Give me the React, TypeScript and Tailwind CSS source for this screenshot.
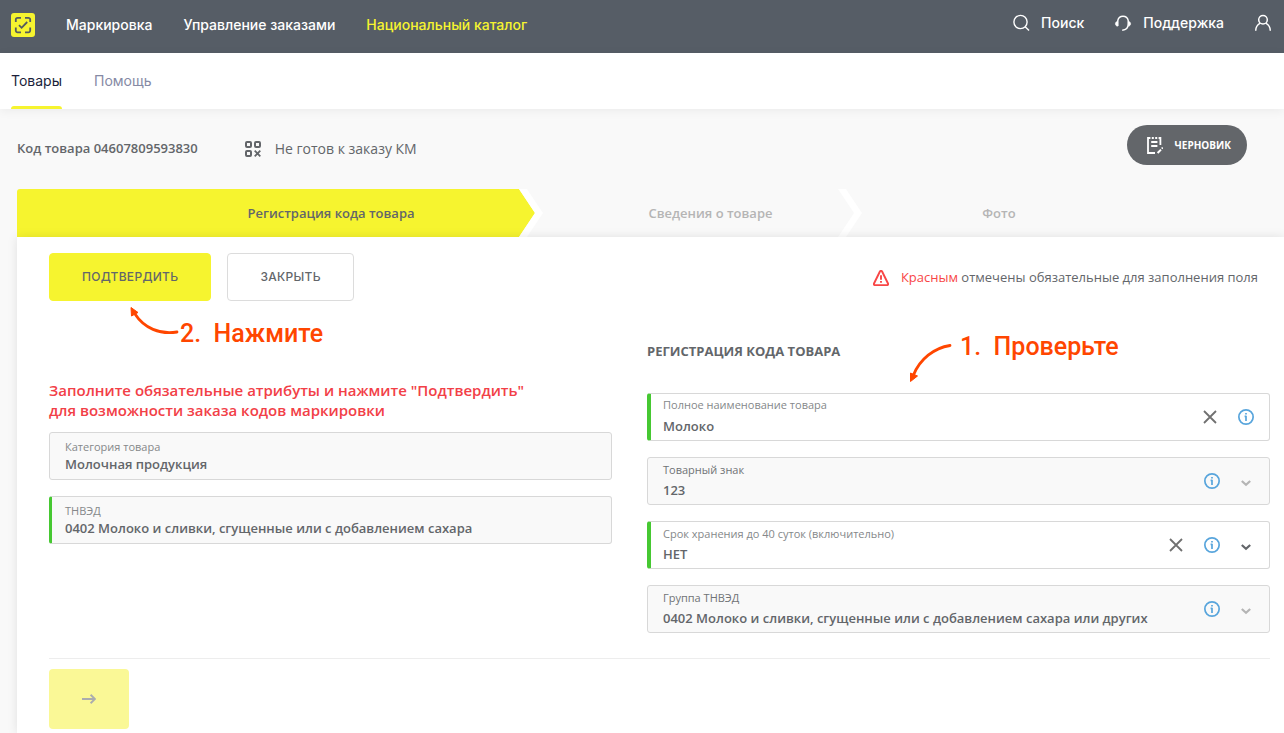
import type { ReactNode } from "react";

function LogoIcon() {
  return (
    <svg width="24" height="24" viewBox="0 0 24 24" fill="none" aria-hidden="true">
      <rect width="24" height="24" rx="3" fill="#f6f42f" />
      <g stroke="#555b5f" strokeWidth="1.8">
        <path d="M4.8 9V6.6a1.8 1.8 0 0 1 1.8-1.8H10M14 4.8h3.4a1.8 1.8 0 0 1 1.8 1.8V9M19.2 14.6v3a1.8 1.8 0 0 1-1.8 1.8H14M10 19.4H6.6a1.8 1.8 0 0 1-1.8-1.8v-3" />
        <path d="m8 12.2 2.6 2.6L16.2 9" />
      </g>
    </svg>
  );
}

function SearchIcon() {
  return (
    <svg width="18" height="18" viewBox="0 0 18 18" fill="none" stroke="#fff" strokeWidth="1.4" aria-hidden="true">
      <circle cx="8.500" cy="8" r="6.600" />
      <path d="m13.200 12.700 3.800 3.800" />
    </svg>
  );
}

function SupportIcon() {
  return (
    <svg width="18" height="18" viewBox="0 0 18 18" fill="none" stroke="#fff" strokeWidth="1.4" aria-hidden="true">
      <path d="M3.8 12V6.5a5.3 5.3 0 0 1 10.400 0V10c0 3.600-1.600 6-6 6.200" />
      <path d="M3.600 7.400C2.200 7.500 1.400 8.500 1.400 9.800s.8 2.200 2.200 2.400zM14.400 7.400c1.400.1 2.200 1.100 2.200 2.400s-.8 2.200-2.200 2.400z" fill="#fff" strokeWidth=".6" />
    </svg>
  );
}

function UserIcon() {
  return (
    <svg width="18" height="18" viewBox="0 0 18 18" fill="none" stroke="#fff" strokeWidth="1.5" aria-hidden="true">
      <circle cx="9" cy="5.700" r="4.300" />
      <path d="M1.700 16.800c0-3.200 1.600-6 4.600-7.600M16.300 16.800c0-3.200-1.600-6-4.600-7.600" />
    </svg>
  );
}

function CodeIcon() {
  return (
    <svg width="16" height="16" viewBox="0 0 16 16" fill="none" stroke="#63666a" strokeWidth="2" aria-hidden="true">
      <rect x="1" y="1" width="5" height="5" rx="1" />
      <rect x="10" y="1" width="5" height="5" rx="1" />
      <rect x="1" y="10" width="5" height="5" rx="1" />
      <path d="m9.700 9.700 5.600 5.600M15.300 9.700l-5.600 5.600" strokeWidth="1.800" />
    </svg>
  );
}

function DraftIcon() {
  return (
    <svg width="16" height="17" viewBox="0 0 16 17" fill="none" stroke="#fff" strokeWidth="1.800" aria-hidden="true">
      <path d="M3.400 1H1v15h7M4.800 1h2M8.200 1h2M11.600 1h1.800v7M4.200 5h6.200M4.200 9h6.200" />
      <path d="m10.600 16 3.400-3.400M14.800 11.600l1-1" strokeWidth="2" />
    </svg>
  );
}

function WarningIcon() {
  return (
    <svg width="16" height="16" viewBox="0 0 16 16" fill="none" stroke="#f84646" strokeWidth="1.900" strokeLinejoin="round" aria-hidden="true">
      <path d="M6.900 1.500a1.300 1.300 0 0 1 2.200 0l5.900 12c.4.900-.1 1.600-1 1.600H2c-.9 0-1.400-.7-1-1.600z" />
      <path d="M8 5.200v4.600M8 11v1.700" />
    </svg>
  );
}

function InfoIcon() {
  return (
    <svg width="16" height="16" viewBox="0 0 16 16" fill="none" stroke="#58a5dc" strokeWidth="1.700" aria-hidden="true">
      <circle cx="8" cy="8" r="7.150" />
      <path d="M8 4v1.600M6.600 7.400H8M8 6.700v5.300" />
    </svg>
  );
}

function ClearIcon() {
  return (
    <svg width="14" height="14" viewBox="0 0 14 14" fill="none" stroke="#707070" strokeWidth="1.800" aria-hidden="true">
      <path d="m1 1 12 12M13 1 1 13" />
    </svg>
  );
}

function ChevronIcon({ active }: { active?: boolean }) {
  return (
    <svg width="10" height="7" viewBox="0 0 10 7" fill="none" stroke={active ? "#63666a" : "#b5b5b5"} strokeWidth="2.200" aria-hidden="true">
      <path d="m.8 1 4.200 3.800L9.200 1" />
    </svg>
  );
}

function StepArrow({ fill }: { fill: string }) {
  return (
    <svg className="block h-12 w-6 shrink-0" viewBox="0 0 24 48" preserveAspectRatio="none" aria-hidden="true">
      <path d="M0 0 16 24 0 48z" fill={fill} />
      <path d="M0 0h8l16 24L8 48H0l16-24z" fill="#fff" />
    </svg>
  );
}

type FieldProps = {
  id: string;
  label: string;
  value: string;
  kind: "text" | "select";
  valid?: boolean;
  disabled?: boolean;
  clearable?: boolean;
  info?: boolean;
  compact?: boolean;
};

function Field({ id, label, value, kind, valid, disabled, clearable, info, compact }: FieldProps) {
  const valueClass =
    "block w-full appearance-none bg-transparent p-0 text-[13px] font-semibold text-[#63666a] opacity-100 outline-none " +
    (compact ? "h-[18px]" : "h-6");
  return (
    <div
      className={
        "flex h-12 items-center rounded-[3px] border border-[#d8d8d8] pr-[15px] " +
        (disabled ? "bg-[#f9f9f9] " : "bg-white ") +
        (valid ? (compact ? "border-l-[3px] border-l-[#46c832] pl-[13px]" : "border-l-4 border-l-[#46c832] pl-3") : "pl-[15px]")
      }
    >
      <div className={"min-w-0 flex-1 " + (kind === "select" ? "pt-[3px]" : "pt-px")}>
        <label
          htmlFor={id}
          className={"block pb-0.5 text-[11px] leading-[14px] " + (disabled && !compact ? "text-[#707376]" : "text-[#85888a]")}
        >
          {label}
        </label>
        {kind === "text" ? (
          <input id={id} type="text" defaultValue={value} readOnly={disabled} className={valueClass} />
        ) : (
          <select id={id} defaultValue={value} disabled={disabled} className={valueClass}>
            <option>{value}</option>
          </select>
        )}
      </div>
      {clearable && (
        <button type="button" aria-label="Очистить" className="mr-5 flex w-4 justify-center">
          <ClearIcon />
        </button>
      )}
      {info && (
        <button type="button" aria-label="Информация" className="flex w-4 justify-center">
          <InfoIcon />
        </button>
      )}
      {kind === "select" && (
        <span className="ml-[18px] mt-1 flex w-4 justify-center">
          <ChevronIcon active={!disabled} />
        </span>
      )}
    </div>
  );
}

function Note({ children, className }: { children: ReactNode; className: string }) {
  return (
    <p
      className={
        "pointer-events-none absolute whitespace-pre font-[Roboto,sans-serif] text-[25px] font-medium leading-9 text-[#ff4600] " +
        className
      }
    >
      {children}
    </p>
  );
}

export default function App() {
  return (
    <div className="flex min-h-screen flex-col overflow-x-hidden bg-[#f9f9f9] font-['Open_Sans','Noto_Sans',sans-serif] text-[#63666a]">
      <header className="flex h-[53px] items-center justify-between bg-[#565d66] pl-[11px] pr-3 font-[Inter,sans-serif] text-sm font-medium text-white">
        <nav className="mb-1 flex items-center gap-[31px]">
          <a href="#" aria-label="Главная">
            <LogoIcon />
          </a>
          <a href="#">Маркировка</a>
          <a href="#">Управление заказами</a>
          <a href="#" className="text-[#f6f42f]">Национальный каталог</a>
        </nav>
        <div className="mb-2 flex items-center gap-[30px]">
          <button type="button" className="flex items-center gap-[11px]">
            <SearchIcon />
            Поиск
          </button>
          <button type="button" className="flex items-center gap-[11px]">
            <SupportIcon />
            Поддержка
          </button>
          <button type="button" aria-label="Профиль">
            <UserIcon />
          </button>
        </div>
      </header>

      <nav className="relative flex h-14 gap-8 bg-white pl-[11px] font-[Inter,sans-serif] text-sm shadow-[0_2px_10px_rgba(0,0,0,0.06)]">
        <a href="#" className="flex flex-col justify-between text-[#1b1f3b]">
          <span className="flex flex-1 items-center pt-[3px]">Товары</span>
          <span className="h-[3px] rounded-t-sm bg-[#f6f42f]" />
        </a>
        <a href="#" className="flex items-center text-[#868aa5]">Помощь</a>
      </nav>

      <div className="flex items-start justify-between pb-6 pl-[17px] pr-[37px] pt-4">
        <div className="flex h-12 items-center">
          <h1 className="text-[13px] font-semibold">Код товара 04607809593830</h1>
          <span className="ml-[47px] mr-3.5">
            <CodeIcon />
          </span>
          <p className="text-sm">Не готов к заказу КМ</p>
        </div>
        <div className="flex h-10 items-center gap-3 rounded-full bg-[#63666a] px-4 pl-5 text-[10px] font-bold text-white">
          <DraftIcon />
          ЧЕРНОВИК
        </div>
      </div>

      <main className="-mt-2 flex flex-1 flex-col pl-[17px]">
        <ol className="grid h-12 grid-cols-[526fr_319fr_422fr] text-[13px] font-semibold">
          <li className="flex">
            <div className="flex flex-1 items-center justify-center rounded-tl-[3px] bg-[#f6f42f] pl-[126px] pt-px">Регистрация кода товара</div>
            <StepArrow fill="#f6f42f" />
          </li>
          <li className="flex text-[#b5b5b5]">
            <div className="flex flex-1 items-center justify-center pl-10 pt-px">Сведения о товаре</div>
            <StepArrow fill="#f9f9f9" />
          </li>
          <li className="flex items-center justify-center pr-[148px] pt-px text-[#b5b5b5]">Фото</li>
        </ol>

        <section className="relative flex-1 bg-white pb-1 pl-8 pr-3.5 pt-4 shadow-[0_0_10px_rgba(0,0,0,0.1)]">
          <div className="flex items-center justify-between">
            <div className="flex gap-4 font-[Inter,sans-serif] text-xs font-medium tracking-wide">
              <button type="button" className="h-12 rounded border border-[#f6f42f] bg-[#f6f42f] px-8">ПОДТВЕРДИТЬ</button>
              <button type="button" className="h-12 rounded border border-[#dcdcdc] px-8">ЗАКРЫТЬ</button>
            </div>
            <p className="flex items-center gap-3 pr-3 pt-0.5 text-[13px]">
              <WarningIcon />
              <span>
                <span className="text-[#f84646]">Красным</span> отмечены обязательные для заполнения поля
              </span>
            </p>
          </div>

          <form className="mt-10 grid grid-cols-[563fr_623fr] gap-[35px]" onSubmit={(e) => e.preventDefault()}>
            <div className="flex flex-col gap-4 pt-[39px]">
              <p className="-mb-1 text-[15px] font-semibold leading-5 text-[#f24047]">
                Заполните обязательные атрибуты и нажмите "Подтвердить"
                <br />
                для возможности заказа кодов маркировки
              </p>
              <Field id="category" label="Категория товара" value="Молочная продукция" kind="text" disabled compact />
              <Field id="tnved" label="ТНВЭД" value="0402 Молоко и сливки, сгущенные или с добавлением сахара" kind="text" disabled valid compact />
            </div>
            <div className="flex flex-col gap-4">
              <h2 className="mb-4 text-[13px] font-bold leading-5">РЕГИСТРАЦИЯ КОДА ТОВАРА</h2>
              <Field id="name" label="Полное наименование товара" value="Молоко" kind="text" valid clearable info />
              <Field id="brand" label="Товарный знак" value="123" kind="select" disabled info />
              <Field id="shelf" label="Срок хранения до 40 суток (включительно)" value="НЕТ" kind="select" valid clearable info />
              <Field id="group" label="Группа ТНВЭД" value="0402 Молоко и сливки, сгущенные или с добавлением сахара или других" kind="select" disabled info />
            </div>
          </form>

          <div className="mt-[25px] border-t border-[#ededed] pt-2.5">
            <button type="button" aria-label="Далее" className="flex h-[60px] w-20 items-center justify-center rounded bg-[#faf896]">
              <svg width="14" height="10" viewBox="0 0 14 10" fill="none" stroke="#aaacae" strokeWidth="1.900" aria-hidden="true">
                <path d="M0 5h13M8.600.7 13 5 8.600 9.300" />
              </svg>
            </button>
          </div>

          <svg className="pointer-events-none absolute left-[113px] top-[69px]" width="52" height="32" viewBox="0 0 52 32" aria-hidden="true">
            <path d="M47 26C30 29 14 22 5 8" fill="none" stroke="#ff4600" strokeWidth="2.800" strokeLinecap="round" />
            <path d="M1 1.500 8 6.500l-6.500 3.500z" fill="#ff4600" stroke="#ff4600" />
          </svg>
          <Note className="left-[163px] top-[79px]">2.  Нажмите</Note>

          <svg className="pointer-events-none absolute left-[892px] top-[105px]" width="44" height="42" viewBox="0 0 44 42" aria-hidden="true">
            <path d="M41 3.500C25 6 11 17 4.500 33" fill="none" stroke="#ff4600" strokeWidth="2.800" strokeLinecap="round" />
            <path d="M1.500 31v8.500l7-5.500z" fill="#ff4600" stroke="#ff4600" />
          </svg>
          <Note className="left-[943px] top-[92px]">1.  Проверьте</Note>
        </section>
      </main>
    </div>
  );
}
